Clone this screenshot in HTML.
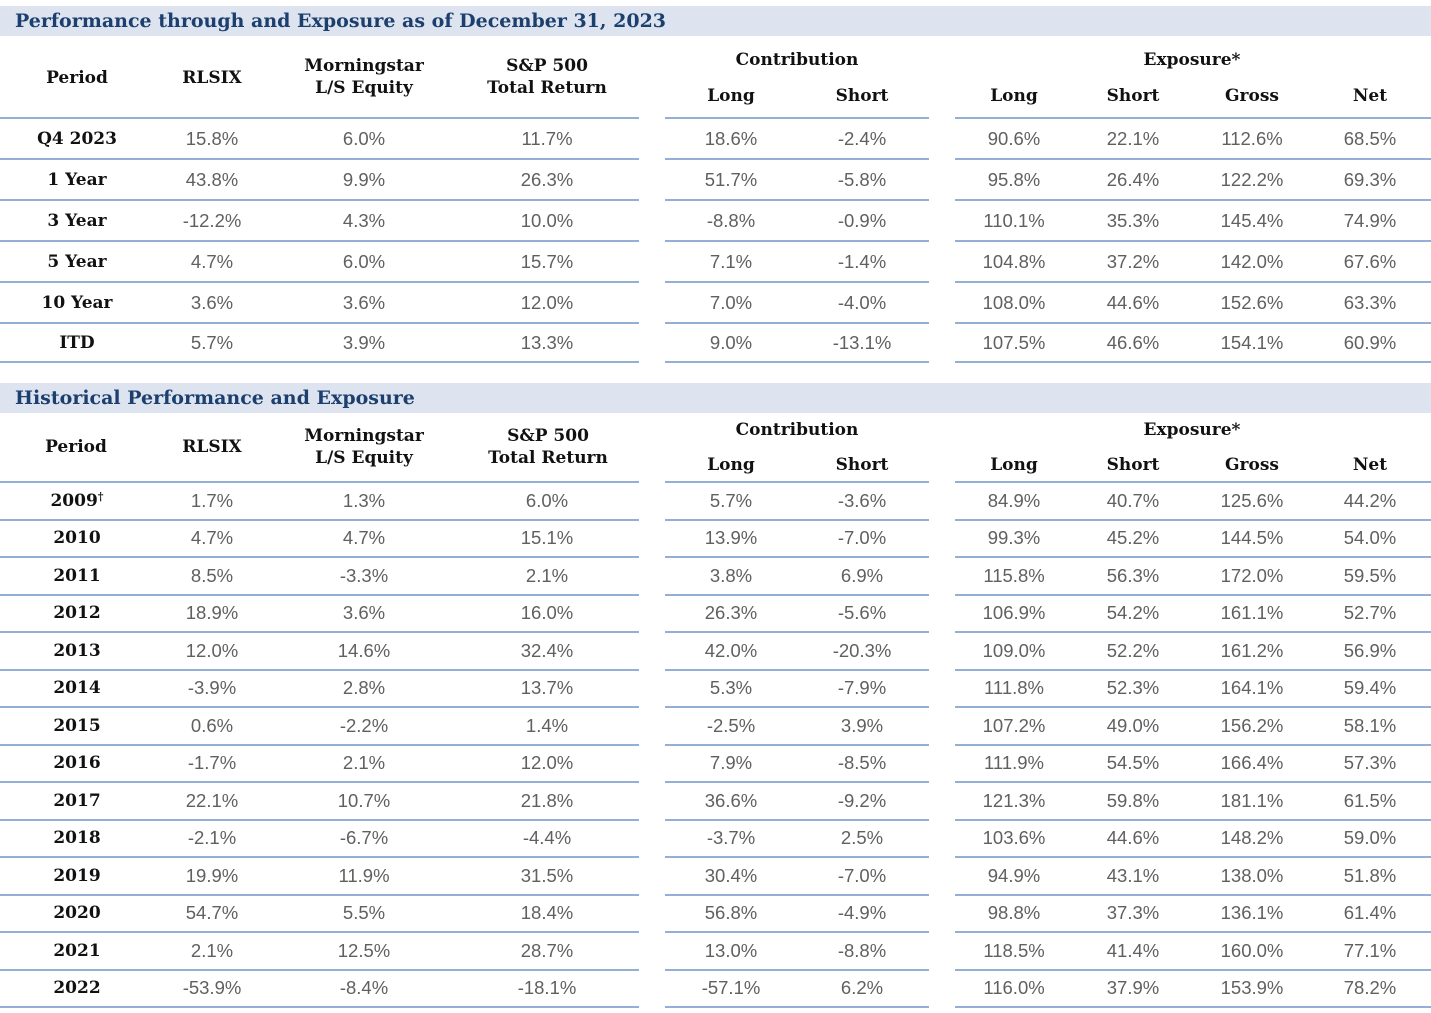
<!DOCTYPE html>
<html><head><meta charset="utf-8"><style>
body{margin:0;width:1431px;height:1013px;background:#fff;position:relative;overflow:hidden;font-family:"Liberation Sans",sans-serif}
.bar{position:absolute;left:0;width:1431px;height:30px;background:#dde4ef}
.bar span{position:absolute;left:15px;top:0px;font:bold 19px/30px "DejaVu Serif",serif;color:#1c3f6e;white-space:nowrap}
.r{position:absolute;left:0;width:1431px;height:22px}
.r span{position:absolute;width:200px;text-align:center;font-size:18.5px;line-height:22px;color:#606060}
.r span:nth-child(1){left:-23px;font:bold 17px/22px "DejaVu Serif",serif;color:#111}
.r span:nth-child(2){left:112px}
.r span:nth-child(3){left:264px}
.r span:nth-child(4){left:447px}
.r span:nth-child(5){left:631px}
.r span:nth-child(6){left:762px}
.r span:nth-child(7){left:914px}
.r span:nth-child(8){left:1033px}
.r span:nth-child(9){left:1152px}
.r span:nth-child(10){left:1270px}
.h span{font:bold 17px/22px "DejaVu Serif",serif !important;color:#111 !important}
.ln{position:absolute;left:0;width:1431px;height:2px}
.ln i{position:absolute;top:0;height:2px;background:#93afd6}
.ln i:nth-child(1){left:0;width:639px}
.ln i:nth-child(2){left:665px;width:264px}
.ln i:nth-child(3){left:955px;width:476px}
.t{position:absolute;font:bold 17px/22px "DejaVu Serif",serif;color:#111;text-align:center;width:240px}
sup{font-size:11px;vertical-align:top;line-height:14px}
</style></head><body>
<div class="bar" style="top:6px"><span>Performance through and Exposure as of December 31, 2023</span></div>
<div class="t" style="left:-43px;top:67px">Period</div>
<div class="t" style="left:92px;top:67px">RLSIX</div>
<div class="t" style="left:244px;top:55px">Morningstar<br>L/S Equity</div>
<div class="t" style="left:427px;top:55px">S&amp;P 500<br>Total Return</div>
<div class="t" style="left:677px;top:49px">Contribution</div>
<div class="t" style="left:1072px;top:49px">Exposure*</div>
<div class="r h" style="top:85px"><span></span><span></span><span></span><span></span><span>Long</span><span>Short</span><span>Long</span><span>Short</span><span>Gross</span><span>Net</span></div>
<div class="ln" style="top:117px"><i></i><i></i><i></i></div>
<div class="r" style="top:128px"><span>Q4 2023</span><span>15.8%</span><span>6.0%</span><span>11.7%</span><span>18.6%</span><span>-2.4%</span><span>90.6%</span><span>22.1%</span><span>112.6%</span><span>68.5%</span></div>
<div class="ln" style="top:158px"><i></i><i></i><i></i></div>
<div class="r" style="top:169px"><span>1 Year</span><span>43.8%</span><span>9.9%</span><span>26.3%</span><span>51.7%</span><span>-5.8%</span><span>95.8%</span><span>26.4%</span><span>122.2%</span><span>69.3%</span></div>
<div class="ln" style="top:199px"><i></i><i></i><i></i></div>
<div class="r" style="top:210px"><span>3 Year</span><span>-12.2%</span><span>4.3%</span><span>10.0%</span><span>-8.8%</span><span>-0.9%</span><span>110.1%</span><span>35.3%</span><span>145.4%</span><span>74.9%</span></div>
<div class="ln" style="top:240px"><i></i><i></i><i></i></div>
<div class="r" style="top:251px"><span>5 Year</span><span>4.7%</span><span>6.0%</span><span>15.7%</span><span>7.1%</span><span>-1.4%</span><span>104.8%</span><span>37.2%</span><span>142.0%</span><span>67.6%</span></div>
<div class="ln" style="top:281px"><i></i><i></i><i></i></div>
<div class="r" style="top:292px"><span>10 Year</span><span>3.6%</span><span>3.6%</span><span>12.0%</span><span>7.0%</span><span>-4.0%</span><span>108.0%</span><span>44.6%</span><span>152.6%</span><span>63.3%</span></div>
<div class="ln" style="top:322px"><i></i><i></i><i></i></div>
<div class="r" style="top:332px"><span>ITD</span><span>5.7%</span><span>3.9%</span><span>13.3%</span><span>9.0%</span><span>-13.1%</span><span>107.5%</span><span>46.6%</span><span>154.1%</span><span>60.9%</span></div>
<div class="ln" style="top:361px"><i></i><i></i><i></i></div>

<div class="bar" style="top:383px"><span>Historical Performance and Exposure</span></div>
<div class="t" style="left:-44px;top:436px">Period</div>
<div class="t" style="left:92px;top:436px">RLSIX</div>
<div class="t" style="left:244px;top:425px">Morningstar<br>L/S Equity</div>
<div class="t" style="left:428px;top:425px">S&amp;P 500<br>Total Return</div>
<div class="t" style="left:677px;top:419px">Contribution</div>
<div class="t" style="left:1072px;top:419px">Exposure*</div>
<div class="r h" style="top:454px"><span></span><span></span><span></span><span></span><span>Long</span><span>Short</span><span>Long</span><span>Short</span><span>Gross</span><span>Net</span></div>
<div class="ln" style="top:481px"><i></i><i></i><i></i></div>
<div class="r" style="top:490px"><span>2009<sup>†</sup></span><span>1.7%</span><span>1.3%</span><span>6.0%</span><span>5.7%</span><span>-3.6%</span><span>84.9%</span><span>40.7%</span><span>125.6%</span><span>44.2%</span></div>
<div class="ln" style="top:519px"><i></i><i></i><i></i></div>
<div class="r" style="top:527px"><span>2010</span><span>4.7%</span><span>4.7%</span><span>15.1%</span><span>13.9%</span><span>-7.0%</span><span>99.3%</span><span>45.2%</span><span>144.5%</span><span>54.0%</span></div>
<div class="ln" style="top:556px"><i></i><i></i><i></i></div>
<div class="r" style="top:565px"><span>2011</span><span>8.5%</span><span>-3.3%</span><span>2.1%</span><span>3.8%</span><span>6.9%</span><span>115.8%</span><span>56.3%</span><span>172.0%</span><span>59.5%</span></div>
<div class="ln" style="top:594px"><i></i><i></i><i></i></div>
<div class="r" style="top:602px"><span>2012</span><span>18.9%</span><span>3.6%</span><span>16.0%</span><span>26.3%</span><span>-5.6%</span><span>106.9%</span><span>54.2%</span><span>161.1%</span><span>52.7%</span></div>
<div class="ln" style="top:631px"><i></i><i></i><i></i></div>
<div class="r" style="top:640px"><span>2013</span><span>12.0%</span><span>14.6%</span><span>32.4%</span><span>42.0%</span><span>-20.3%</span><span>109.0%</span><span>52.2%</span><span>161.2%</span><span>56.9%</span></div>
<div class="ln" style="top:669px"><i></i><i></i><i></i></div>
<div class="r" style="top:677px"><span>2014</span><span>-3.9%</span><span>2.8%</span><span>13.7%</span><span>5.3%</span><span>-7.9%</span><span>111.8%</span><span>52.3%</span><span>164.1%</span><span>59.4%</span></div>
<div class="ln" style="top:706px"><i></i><i></i><i></i></div>
<div class="r" style="top:715px"><span>2015</span><span>0.6%</span><span>-2.2%</span><span>1.4%</span><span>-2.5%</span><span>3.9%</span><span>107.2%</span><span>49.0%</span><span>156.2%</span><span>58.1%</span></div>
<div class="ln" style="top:744px"><i></i><i></i><i></i></div>
<div class="r" style="top:752px"><span>2016</span><span>-1.7%</span><span>2.1%</span><span>12.0%</span><span>7.9%</span><span>-8.5%</span><span>111.9%</span><span>54.5%</span><span>166.4%</span><span>57.3%</span></div>
<div class="ln" style="top:781px"><i></i><i></i><i></i></div>
<div class="r" style="top:790px"><span>2017</span><span>22.1%</span><span>10.7%</span><span>21.8%</span><span>36.6%</span><span>-9.2%</span><span>121.3%</span><span>59.8%</span><span>181.1%</span><span>61.5%</span></div>
<div class="ln" style="top:819px"><i></i><i></i><i></i></div>
<div class="r" style="top:827px"><span>2018</span><span>-2.1%</span><span>-6.7%</span><span>-4.4%</span><span>-3.7%</span><span>2.5%</span><span>103.6%</span><span>44.6%</span><span>148.2%</span><span>59.0%</span></div>
<div class="ln" style="top:856px"><i></i><i></i><i></i></div>
<div class="r" style="top:865px"><span>2019</span><span>19.9%</span><span>11.9%</span><span>31.5%</span><span>30.4%</span><span>-7.0%</span><span>94.9%</span><span>43.1%</span><span>138.0%</span><span>51.8%</span></div>
<div class="ln" style="top:894px"><i></i><i></i><i></i></div>
<div class="r" style="top:902px"><span>2020</span><span>54.7%</span><span>5.5%</span><span>18.4%</span><span>56.8%</span><span>-4.9%</span><span>98.8%</span><span>37.3%</span><span>136.1%</span><span>61.4%</span></div>
<div class="ln" style="top:931px"><i></i><i></i><i></i></div>
<div class="r" style="top:940px"><span>2021</span><span>2.1%</span><span>12.5%</span><span>28.7%</span><span>13.0%</span><span>-8.8%</span><span>118.5%</span><span>41.4%</span><span>160.0%</span><span>77.1%</span></div>
<div class="ln" style="top:969px"><i></i><i></i><i></i></div>
<div class="r" style="top:977px"><span>2022</span><span>-53.9%</span><span>-8.4%</span><span>-18.1%</span><span>-57.1%</span><span>6.2%</span><span>116.0%</span><span>37.9%</span><span>153.9%</span><span>78.2%</span></div>
<div class="ln" style="top:1006px"><i></i><i></i><i></i></div>
</body></html>
